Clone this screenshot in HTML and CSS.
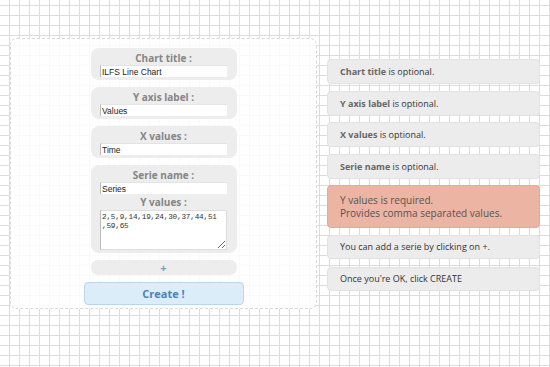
FILE: index.html
```html
<!DOCTYPE html>
<html>
<head>
<meta charset="utf-8">
<link rel="stylesheet" href="styles.css">
</head>
<body>
<div class="page">
  <div class="panel">
    <div class="group">
      <div class="label">Chart title :</div>
      <input class="field" type="text" value="ILFS Line Chart">
    </div>
    <div class="group">
      <div class="label">Y axis label :</div>
      <input class="field" type="text" value="Values">
    </div>
    <div class="group">
      <div class="label">X values :</div>
      <input class="field" type="text" value="Time">
    </div>
    <div class="group">
      <div class="label">Serie name :</div>
      <input class="field" type="text" value="Series">
      <div class="label label-2">Y values :</div>
      <textarea class="area">2,5,9,14,19,24,30,37,44,51,59,65</textarea>
    </div>
    <div class="plus">+</div>
    <button class="create">Create !</button>
  </div>
  <div class="tips">
    <div class="tip"><span class="key">Chart title</span> is optional.</div>
    <div class="tip"><span class="key">Y axis label</span> is optional.</div>
    <div class="tip"><span class="key">X values</span> is optional.</div>
    <div class="tip"><span class="key">Serie name</span> is optional.</div>
    <div class="tip tip-error"><span class="key">Y values</span> is required.<br>Provides comma separated values.</div>
    <div class="tip tip-info">You can add a serie by clicking on +.</div>
    <div class="tip tip-info">Once you're OK, click CREATE</div>
  </div>
</div>
</body>
</html>
```
FILE: styles.css
```css
html, body {
  margin: 0;
  padding: 0;
}
body {
  width: 550px;
  height: 367px;
  background-color: #fff;
  background-image:
    linear-gradient(to right, #dcdcdc 1px, transparent 1px),
    linear-gradient(to bottom, #dcdcdc 1px, transparent 1px);
  background-size: 10px 10px;
  background-position: 9px 5px;
  font-family: "Open Sans", sans-serif;
  overflow: hidden;
}
.page {
  display: flex;
  align-items: flex-start;
  padding: 38px 0 0 10px;
}
.panel {
  box-sizing: border-box;
  width: 307px;
  height: 271px;
  background: rgba(255, 255, 255, 0.86);
  border: 1px dashed #d8d8d8;
  border-radius: 7px;
  display: flex;
  flex-direction: column;
  align-items: center;
  padding-top: 9px;
}
.group {
  box-sizing: border-box;
  width: 146px;
  background: #ededed;
  border-radius: 8px;
  display: flex;
  flex-direction: column;
  align-items: center;
  padding: 3px 0 3px;
  margin-bottom: 7px;
}
.label {
  font-size: 10px;
  font-weight: bold;
  color: #858585;
  line-height: 14px;
  height: 14px;
}
.label-2 {
  margin-top: 1px;
  margin-bottom: 1px;
}
.field {
  box-sizing: border-box;
  width: 127px;
  height: 12px;
  border: none;
  border-left: 1px solid #bbb;
  border-top: 1px solid #e4e4e4;
  background: #fff;
  padding: 0 0 0 1px;
  margin: 0;
  font-family: "Liberation Sans", Arial, sans-serif;
  font-size: 8.5px;
  color: #222;
  outline: none;
}
.area {
  box-sizing: border-box;
  width: 127px;
  height: 40px;
  border: 1px solid #ddd;
  border-left-color: #bbb;
  background: #fff;
  padding: 2px 6px 0 1px;
  margin: 0;
  font-family: "Liberation Mono", "Courier New", monospace;
  font-size: 7.7px;
  letter-spacing: -0.2px;
  line-height: 9px;
  color: #333;
  resize: both;
  line-break: anywhere;
  word-break: break-all;
  overflow: hidden;
}
.plus {
  box-sizing: border-box;
  width: 146px;
  height: 15px;
  background: #ededed;
  border-radius: 7px;
  color: #6f9fcf;
  font-size: 11px;
  font-weight: bold;
  text-align: center;
  line-height: 15px;
  margin-bottom: 7px;
}
.create {
  box-sizing: border-box;
  width: 160px;
  height: 23px;
  background: #dcedfa;
  border: 1px solid #b8d6ee;
  border-radius: 4px;
  color: #4a82b8;
  font-family: "Open Sans", sans-serif;
  font-size: 11px;
  font-weight: bold;
  padding: 0;
}
.tips {
  margin: 21px 0 0 10px;
  width: 213px;
  display: flex;
  flex-direction: column;
}
.tip {
  box-sizing: border-box;
  height: 25px;
  background: #ececec;
  border: 1px solid #e2e2e2;
  border-radius: 4px;
  padding: 0 0 0 12px;
  font-size: 9px;
  line-height: 23px;
  color: #333;
  margin-bottom: 6.5px;
}
.key {
  color: #666;
  font-weight: bold;
}
.tip-error {
  height: 43px;
  background: #ebb4a3;
  border-color: #e3aa99;
  font-size: 10px;
  line-height: 12.7px;
  padding: 8px 0 0 12px;
  color: #555;
  margin-bottom: 7px;
}
.tip-error .key {
  font-weight: normal;
  color: #555;
}
.tip-info {
  height: 24px;
  line-height: 22px;
  margin-bottom: 8px;
}
```
